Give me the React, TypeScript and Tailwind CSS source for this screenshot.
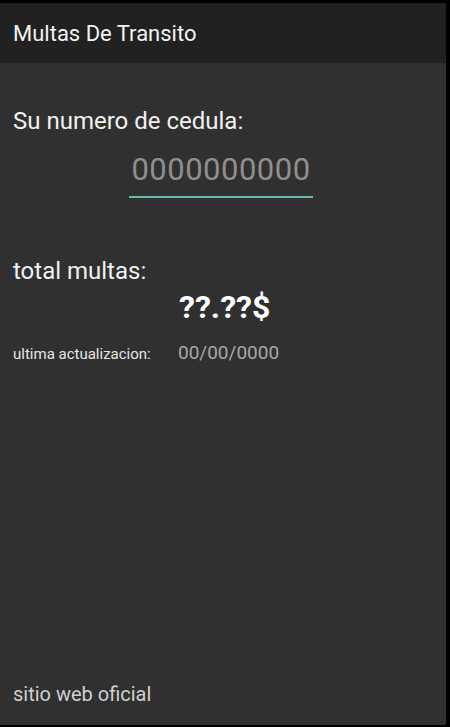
import React from "react";

export default function App() {
  return (
    <div
      className="flex h-[727px] w-[450px] flex-col bg-black pt-[3px] pr-[4px] pb-[2px]"
      style={{ fontFamily: "Roboto, 'Noto Sans', sans-serif" }}
    >
      {/* Action bar */}
      <div className="flex h-[60px] items-center bg-[#212121] px-[13px]">
        <span className="text-[22px] text-[#f2f2f2]">Multas De Transito</span>
      </div>

      {/* Content */}
      <div className="flex flex-1 flex-col bg-[#303030] px-[13px]">
        <div className="mt-[43px] text-[24px] leading-[30px] text-[#f0f0f0]">
          Su numero de cedula:
        </div>
        <div className="mt-[16px] flex pl-[116px]">
          <div className="w-[184px] border-b-2 border-[#6ab9b1] pb-[8px] text-center text-[31px] leading-[36px] tracking-[0.5px] text-[#8f8f8f]">
            0000000000
          </div>
        </div>

        <div className="mt-[58px] text-[24px] leading-[30px] text-[#f0f0f0]">
          total multas:
        </div>
        <div className="mt-[3px] flex pl-[166px]">
          <span className="text-[32px] font-bold leading-[36px] text-white">??.??$</span>
        </div>
        <div className="mt-[14px] flex items-baseline">
          <span className="w-[165px] text-[15px] text-[#e6e6e6]">ultima actualizacion:</span>
          <span className="text-[19px] text-[#a8a8a8]">00/00/0000</span>
        </div>

        <div className="mt-auto mb-[16px] text-[20px] text-[#cfcfcf]">sitio web oficial</div>
      </div>
    </div>
  );
}
